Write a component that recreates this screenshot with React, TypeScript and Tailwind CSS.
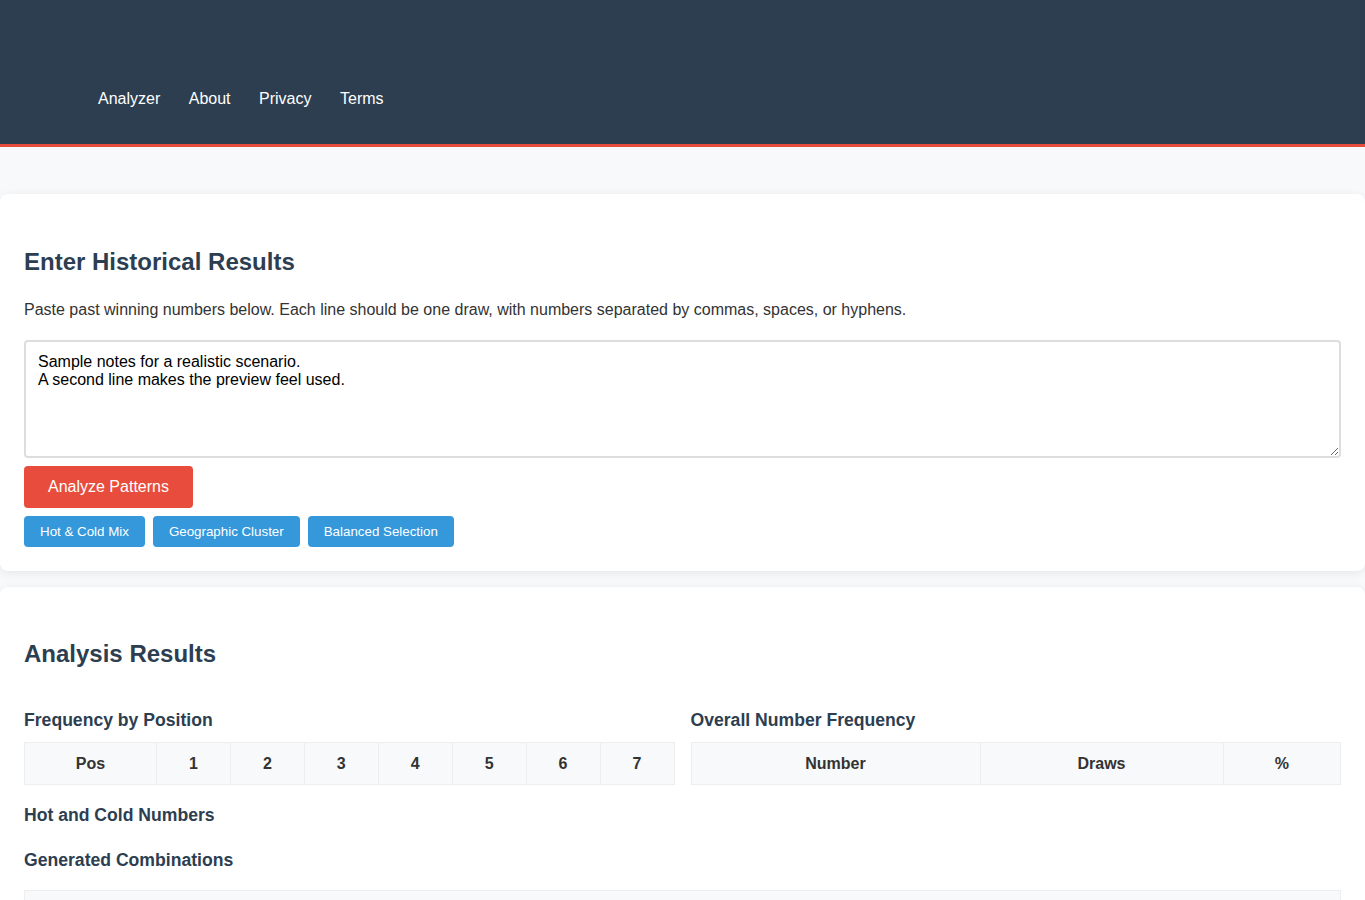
import React from 'react';

const posCols = ['1', '2', '3', '4', '5', '6', '7'];

const App = () => {
  return (
    <div className="min-h-screen bg-[#f8f9fa] font-['Liberation_Sans',Arial,sans-serif] text-[#333]">
      <header className="h-[147px] bg-[#2c3e50] border-b-[3px] border-[#e74c3c]">
        <nav className="flex gap-[28.5px] pl-[98px] pt-[87px] text-white text-base">
          <a className="hover:underline">Analyzer</a>
          <a className="hover:underline">About</a>
          <a className="hover:underline">Privacy</a>
          <a className="hover:underline">Terms</a>
        </nav>
      </header>

      <main className="pt-[47px] flex flex-col gap-4">
        <section className="bg-white rounded-lg shadow-[0_2px_10px_rgba(0,0,0,0.08)] px-6 pt-[51px] pb-6">
          <h2 className="text-2xl font-bold text-[#2c3e50] leading-[34px]">Enter Historical Results</h2>
          <p className="mt-[19px] text-base leading-[24px]">
            Paste past winning numbers below. Each line should be one draw, with numbers separated by commas, spaces, or hyphens.
          </p>
          <textarea
            className="mt-[18px] block w-full h-[118px] border-2 border-[#ddd] rounded px-3 py-[11px] text-base leading-[18px] text-black resize-y outline-none"
            defaultValue={'Sample notes for a realistic scenario.\nA second line makes the preview feel used.'}
          />
          <button className="mt-2 bg-[#e74c3c] text-white text-base rounded px-6 h-[42px]">Analyze Patterns</button>
          <div className="mt-2 flex gap-2">
            <button className="bg-[#3498db] text-white text-[13.333px] rounded px-4 h-[31px]">Hot &amp; Cold Mix</button>
            <button className="bg-[#3498db] text-white text-[13.333px] rounded px-4 h-[31px]">Geographic Cluster</button>
            <button className="bg-[#3498db] text-white text-[13.333px] rounded px-4 h-[31px]">Balanced Selection</button>
          </div>
        </section>

        <section className="bg-white rounded-lg shadow-[0_2px_10px_rgba(0,0,0,0.08)] px-6 pt-[50px] pb-6">
          <h2 className="text-2xl font-bold text-[#2c3e50] leading-[34px]">Analysis Results</h2>
          <div className="mt-[37px] grid grid-cols-2 gap-4">
            <div>
              <h3 className="text-[17.6px] font-bold text-[#2c3e50] leading-[24px]">Frequency by Position</h3>
              <table className="mt-[10px] w-full border-collapse text-base">
                <thead>
                  <tr className="bg-[#f8f9fa]">
                    <th className="border border-[#eee] h-[42px] w-[132px] font-bold">Pos</th>
                    {posCols.map((c) => (
                      <th key={c} className="border border-[#eee] font-bold">{c}</th>
                    ))}
                  </tr>
                </thead>
              </table>
            </div>
            <div>
              <h3 className="text-[17.6px] font-bold text-[#2c3e50] leading-[24px]">Overall Number Frequency</h3>
              <table className="mt-[10px] w-full border-collapse text-base">
                <thead>
                  <tr className="bg-[#f8f9fa]">
                    <th className="border border-[#eee] h-[42px] w-[289px] font-bold">Number</th>
                    <th className="border border-[#eee] w-[243px] font-bold">Draws</th>
                    <th className="border border-[#eee] font-bold">%</th>
                  </tr>
                </thead>
              </table>
            </div>
          </div>
          <h3 className="mt-[18px] text-[17.6px] font-bold text-[#2c3e50] leading-[24px]">Hot and Cold Numbers</h3>
          <h3 className="mt-[21px] text-[17.6px] font-bold text-[#2c3e50] leading-[24px]">Generated Combinations</h3>
          <div className="mt-[18px] h-[43px] bg-[#f8f9fa] border border-[#eee]" />
        </section>
      </main>
    </div>
  );
};

export default App;
